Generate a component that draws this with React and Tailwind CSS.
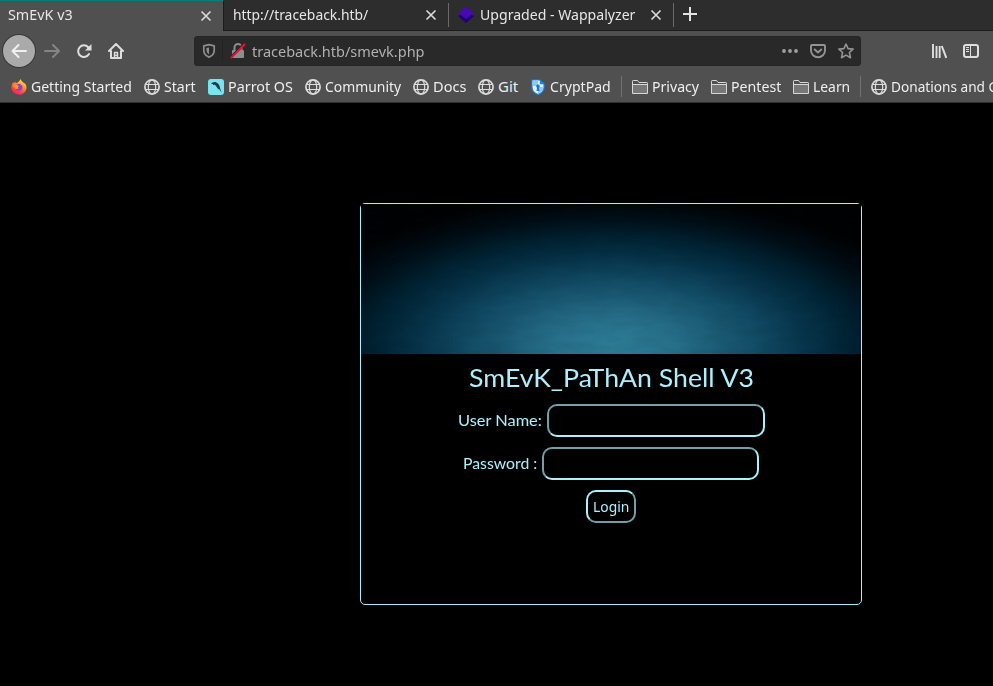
import { useLayoutEffect, useRef, useState } from "react";

const UI = "font-['Noto_Sans',sans-serif]";

// Text squeezed or stretched sideways so that it fills exactly `width` pixels.
function Label({ text, width, className = "", lift = "mb-0.5" }) {
  const ref = useRef(null);
  const [scale, setScale] = useState(1);
  useLayoutEffect(() => {
    setScale(width / ref.current.offsetWidth);
  }, [text, width]);
  return (
    <span className={`block shrink-0 whitespace-nowrap leading-5 ${lift} ${className}`} style={{ width }}>
      <span ref={ref} className="inline-block origin-left" style={{ transform: `scaleX(${scale})` }}>
        {text}
      </span>
    </span>
  );
}

function Close() {
  return (
    <svg width="12" height="12" viewBox="0 0 12 12" className="shrink-0" fill="none" stroke="#d8d8d8" strokeWidth="1.7">
      <path d="M1.5 1.5l9 9M10.5 1.5l-9 9" />
    </svg>
  );
}

function Globe() {
  return (
    <svg width="16" height="16" viewBox="0 0 16 16" fill="none" stroke="#dcdcdc" strokeWidth="1.2">
      <circle cx="8" cy="8" r="7.1" strokeWidth="1.7" />
      <ellipse cx="8" cy="8" rx="3.7" ry="7" />
      <path d="M1 5.5h14M1 10.5h14" />
    </svg>
  );
}

function Folder() {
  return (
    <svg width="16" height="16" viewBox="0 0 16 16" fill="none" stroke="#d8d8d8">
      <path d="M.5 14.500V2.200q0-.7.7-.7h4.300l1.500 2h7.800q.7 0 .7.7V14.500z" fill="#505050" />
      <path d="M1 6h14V14H1z" fill="#777" stroke="none" />
      <path d="M.5 5.500h15" />
    </svg>
  );
}

function Firefox() {
  return (
    <svg width="16" height="16" viewBox="0 0 16 16">
      <defs>
        <linearGradient id="flame" x1=".8" y1="0" x2=".3" y2="1">
          <stop offset="0" stopColor="#fff044" />
          <stop offset=".4" stopColor="#ff9a1e" />
          <stop offset=".75" stopColor="#ff4338" />
          <stop offset="1" stopColor="#f0147a" />
        </linearGradient>
      </defs>
      <path d="M9.800 0c.2 1.700 1.300 2.300 2.500 3.500C14 4 15.700 6 15.500 8.700 15.200 13 12 15.700 8 15.700S.5 12.800.4 8.600C.3 6.500 1.200 4.700 2.300 3.300l.5 1.200 1.300-1.900.6 1.600C7 4 8.200 2 9.800 0z" fill="url(#flame)" />
      <path d="M4.800 6.500c.8-1.400 2.700-2 4.400-1.300 2.500 1 3 4 1.200 5.700-1.900 1.700-5 1-5.700-1.200 1 .5 2 .3 2.900-.4l-1.200-1.200 1-.9z" fill="#7a46e8" />
      <path d="M2 7l3-1.500L8 7 6.500 8.500l1 .7c-1 1-2.600.8-3.200.2z" fill="#ff9a1e" />
    </svg>
  );
}

function Parrot() {
  return (
    <svg width="16" height="16" viewBox="0 0 16 16">
      <rect width="16" height="16" rx="3" fill="#78e3f1" />
      <path d="M3 5C4 3.200 6.500 2.500 8.500 3.400c2.300 1.200 3.200 3 3.500 5.500l1.500 4.600-2.700-3.700-.4.800L8.300 7.500 7 5.800 5.200 6 4.800 5z" fill="#253c43" />
    </svg>
  );
}

function CryptShield() {
  return (
    <svg width="15" height="16" viewBox="0 0 15 16">
      <path d="M1 1h8l4 4v3.500c0 3.500-2.500 5.500-6 7-3.500-1.500-6-3.500-6-7z" fill="#e9f5ff" stroke="#1685e8" strokeWidth="1.200" />
      <path d="M1.500 1.500H7V7H1.500zM7 8h5.500c-.3 3.500-2.500 5-5.500 6.500z" fill="#8bc9fb" />
      <path d="M8.800.8v4.500h4.400z" fill="#1685e8" />
      <path d="M7 5.500a1.800 1.800 0 0 1 1 3.300l.5 3.200h-3L6 8.800a1.800 1.800 0 0 1 1-3.300z" fill="#1479d8" />
    </svg>
  );
}

function Item({ icon, text, width, className }) {
  return (
    <div className={`flex shrink-0 items-center ${className}`}>
      {icon}
      <Label text={text} width={width} className="ml-1" />
    </div>
  );
}

function Tabs() {
  return (
    <div className="flex h-[31px] bg-[#2d2d2d] text-[#e6e6e6]">
      <div className="flex h-[31px] w-[223px] items-center border-t border-[#008080] bg-[#505050] pl-2 pr-[11px] pb-px">
        <Label text="SmEvK v3" width={65} lift="mb-1" />
        <span className="grow" />
        <Close />
      </div>
      <div className="flex grow items-center border-b border-l border-[#1c1c1c]">
        <div className="flex w-[224px] items-center pl-[9px] pr-[11px]">
          <Label text="http://traceback.htb/" width={135} />
          <span className="grow" />
          <Close />
        </div>
        <span className="h-6 w-px bg-[#6a6a6a]" />
        <div className="flex w-[224px] items-center pl-[9px] pr-[11px]">
          <svg width="16" height="16" viewBox="0 0 16 16">
            <path d="M0 9l8-4 8 4-8 7z" fill="#1c0273" />
            <path d="M8 .3L16 6l-8 6-8-6z" fill="#4a08b5" />
          </svg>
          <Label text="Upgraded - Wappalyzer" width={155} className="ml-[6px]" />
          <span className="grow" />
          <Close />
        </div>
        <span className="h-6 w-px bg-[#6a6a6a]" />
        <svg width="14" height="14" viewBox="0 0 14 14" className="ml-[9px] -mt-[2px]" stroke="#e4e4e4" strokeWidth="2">
          <path d="M7 0v14M0 7h14" />
        </svg>
      </div>
    </div>
  );
}

function Toolbar() {
  return (
    <div className="flex h-10 items-center pl-[3px]">
      <div className="flex size-8 items-center justify-center rounded-full bg-[#aaa] ring-1 ring-[#383838]">
        <svg width="16" height="16" viewBox="0 0 16 16" fill="none" stroke="#f0f0f0" strokeWidth="2" strokeLinecap="round" strokeLinejoin="round">
          <path d="M15 8H1.500M7.500 2l-6 6 6 6" />
        </svg>
      </div>
      <svg width="16" height="16" viewBox="0 0 16 16" className="ml-[9px]" fill="none" stroke="#858585" strokeWidth="2" strokeLinecap="round" strokeLinejoin="round">
        <path d="M1 8h14M9 2l6 6-6 6" />
      </svg>
      <svg width="16" height="16" viewBox="0 0 16 16" className="ml-4" fill="none" stroke="#dedede" strokeWidth="2">
        <path d="M12.200 4.200A5.800 5.800 0 1 0 13 11" strokeLinecap="round" />
        <path d="M15.500 1v6.500H9z" fill="#dedede" stroke="none" />
      </svg>
      <svg width="16" height="16" viewBox="0 0 16 16" className="ml-4" fill="none" stroke="#dedede" strokeWidth="2" strokeLinejoin="round" strokeLinecap="round">
        <path d="M1 8l7-7 7 7M3 8v7h10V8" />
        <path d="M6.500 15V9.500h3V15M8 12.300v.2" strokeWidth="1.500" />
      </svg>
      <div className="ml-[70px] flex h-[30px] w-[667px] items-center rounded-[3px] border border-[#252525] bg-[#292929] pl-[7px] text-[#b0b0b0]">
        <svg width="14" height="16" viewBox="0 0 14 16" fill="none" stroke="#8d8d8d" strokeWidth="1.700">
          <path d="M7 1.700l5.200 1.200v4.600c0 3.200-2 5.300-5.200 6.600-3.200-1.300-5.200-3.400-5.200-6.600V2.900z" strokeLinejoin="round" />
          <path d="M7 4.500v7C5.300 10.300 4.500 9 4.500 7.500V5z" fill="#8d8d8d" stroke="none" />
        </svg>
        <span className="ml-[6px] h-5 w-px bg-[#222]" />
        <svg width="16" height="16" viewBox="0 0 16 16" className="ml-[7px]" fill="none">
          <path d="M4.500 8V4.500a3.500 3.500 0 0 1 7 0V8" stroke="#8d8d8d" strokeWidth="2" />
          <rect x="2" y="7" width="12" height="8" rx="1" fill="#8d8d8d" />
          <path d="M.5 14L13.500.5" stroke="#292929" strokeWidth="1.500" />
          <path d="M1.500 14.500L14.500 1.500" stroke="#ff0039" strokeWidth="1.900" strokeLinecap="round" />
        </svg>
        <Label text="traceback.htb/smevk.php" width={173} className="ml-[6px]" lift="mb-0" />
        <span className="grow" />
        <svg width="16" height="16" viewBox="0 0 16 16" fill="#a0a0a0">
          <circle cx="2" cy="8" r="1.900" /><circle cx="8" cy="8" r="1.900" /><circle cx="14" cy="8" r="1.900" />
        </svg>
        <svg width="16" height="16" viewBox="0 0 16 16" className="ml-3" fill="none" stroke="#949494" strokeWidth="1.900" strokeLinecap="round" strokeLinejoin="round">
          <path d="M2 2h12q1 0 1 1v4.500a7 6.700 0 0 1-14 0V3q0-1 1-1z" />
          <path d="M4.700 6.500L8 9.500l3.300-3" />
        </svg>
        <svg width="16" height="16" viewBox="0 0 16 16" className="ml-3 mr-[6px]" fill="none" stroke="#949494" strokeWidth="1.600" strokeLinejoin="round">
          <path d="M8 1l2.100 4.600 5 .5-3.700 3.400 1.100 5.200L8 12.100l-4.500 2.600 1.100-5.200L.9 6.100l5-.5z" />
        </svg>
      </div>
      <svg width="16" height="16" viewBox="0 0 16 16" className="ml-[70px]" stroke="#dedede" strokeWidth="2">
        <path d="M2 1v14M5.500 3v12M8.700 3v12" strokeWidth="1.900" />
        <path d="M10.800 3l4.500 12" />
      </svg>
      <svg width="16" height="16" viewBox="0 0 16 16" className="ml-4" fill="none" stroke="#dedede" strokeWidth="2">
        <rect x="1" y="2" width="14" height="12" rx="2" />
        <path d="M7.500 2v12" strokeWidth="1" />
        <path d="M3 4.500h3M3 6.500h3M3 8.500h3" strokeWidth="1" />
      </svg>
    </div>
  );
}

function Bookmarks() {
  return (
    <div className="flex h-8 items-center overflow-hidden border-b border-[#303030] pl-[11px] text-[#eee]">
      <Item icon={<Firefox />} text="Getting Started" width={101} className="w-[133px]" />
      <Item icon={<Globe />} text="Start" width={32} className="w-16" />
      <Item icon={<Parrot />} text="Parrot OS" width={65} className="w-[97px]" />
      <Item icon={<Globe />} text="Community" width={76} className="w-[108px]" />
      <Item icon={<Globe />} text="Docs" width={33} className="w-[65px]" />
      <Item icon={<Globe />} text="Git" width={20} className="w-[53px]" />
      <Item icon={<CryptShield />} text="CryptPad" width={61} className="w-[90px]" />
      <span className="h-[21px] w-px shrink-0 bg-[#727272]" />
      <Item icon={<Folder />} text="Privacy" width={47} className="ml-[10px] w-[79px]" />
      <Item icon={<Folder />} text="Pentest" width={50} className="w-[82px]" />
      <Item icon={<Folder />} text="Learn" width={37} className="w-[67px]" />
      <span className="h-[21px] w-px shrink-0 bg-[#727272]" />
      <Item icon={<Globe />} text="Donations and Gadgets" width={151} className="ml-[10px]" />
    </div>
  );
}

function Field({ label, width, type, box }) {
  return (
    <label className="flex h-[33px] items-center justify-center">
      <Label text={label} width={width} className="mr-[5px] text-[16px]" />
      <input type={type} className={`h-[33px] rounded-[10px] border-2 border-t-[#749fa9] border-l-[#749fa9] border-r-[#aeeffe] border-b-[#aeeffe] bg-black px-2 outline-none ${box}`} />
    </label>
  );
}

export default function App() {
  return (
    <div className={`h-[686px] w-[993px] overflow-hidden bg-black text-[15px] ${UI}`}>
      <header className="bg-[#505050]">
        <Tabs />
        <Toolbar />
        <Bookmarks />
      </header>
      <main className="ml-[360px] mt-[100px] h-[402px] w-[502px] rounded-[5px] border border-[#aeeffe] font-[Lato,sans-serif] text-[#aeeffe]">
        <div className="h-[150px] bg-[radial-gradient(ellipse_335px_150px_at_50.5%_94%,#2d7c95_0%,#276f8a_18%,#1b5a74_32%,#104861_45%,#063248_59%,#00202f_73%,#000d15_86%,#000203_100%)]">
          <svg width="500" height="150" className="opacity-5">
            <filter id="grain" x="0" y="0" width="100%" height="100%">
              <feTurbulence type="fractalNoise" baseFrequency=".04 .13" numOctaves="3" seed="4" />
              <feColorMatrix values="0 0 0 0 0  0 0 0 0 0  0 0 0 0 0  2 0 0 0 -.7" />
            </filter>
            <rect width="500" height="150" filter="url(#grain)" />
          </svg>
        </div>
        <h1 className="flex h-[50px] justify-center pt-[13px] text-[25px]">
          <Label text="SmEvK_PaThAn Shell V3" width={285} />
        </h1>
        <form className="flex flex-col gap-[10px]">
          <Field label="User Name:" width={84} type="text" box="w-[218px]" />
          <Field label="Password :" width={74} type="password" box="w-[217px]" />
          <button type="button" className={`flex h-[33px] w-[50px] items-center justify-center self-center rounded-[10px] border-2 border-t-[#aeeffe] border-l-[#aeeffe] border-r-[#749fa9] border-b-[#749fa9] text-left ${UI}`}>
            <Label text="Login" width={36} />
          </button>
        </form>
      </main>
    </div>
  );
}
